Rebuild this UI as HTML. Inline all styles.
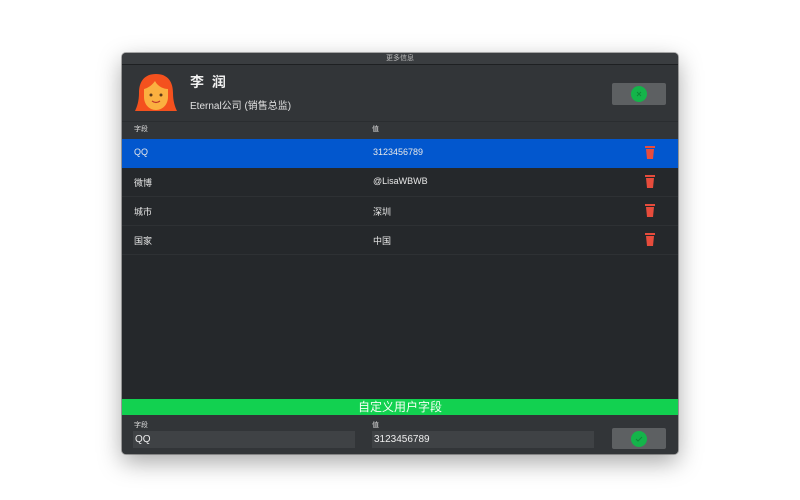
<!DOCTYPE html>
<html><head><meta charset="utf-8"><style>
*{margin:0;padding:0;box-sizing:border-box}
body{width:800px;height:500px;background:#fff;position:relative;overflow:hidden;font-family:"Liberation Sans","Noto Sans CJK SC",sans-serif;color:#e6e6e6}
.win{position:absolute;left:122px;top:53px;width:556px;height:401px;background:#25282b;border-radius:4px;box-shadow:0 8px 24px rgba(0,0,0,.35),0 0 0 1px rgba(0,0,0,.3);overflow:hidden}
.title{position:absolute;left:0;top:0;width:556px;height:12px;background:#3a3d40;border-bottom:1px solid #1e2022;font-size:7px;color:#bbb;text-align:center;line-height:12px}
.head{position:absolute;left:0;top:12px;width:556px;height:56px;background:#323538}
.name{position:absolute;left:68px;top:7px;font-size:14px;font-weight:bold;letter-spacing:2px;color:#f0f0f0}
.org{position:absolute;left:68px;top:32px;font-size:10px;color:#e0e0e0}
.btn{position:absolute;width:54px;height:22px;background:#5d6062;border-radius:2px}
.btn i{position:absolute;left:19px;top:3px;width:16px;height:16px;border-radius:50%;background:#14b44a}
.colh{position:absolute;left:0;top:68px;width:556px;height:18px;background:#323538;border-top:1px solid #2a2d30;font-size:7px;color:#ddd}
.colh span{position:absolute;top:2px}
.row{position:absolute;left:0;width:556px;height:29px;border-bottom:1px solid #2e3134;font-size:9px;color:#e8e8e8}
.row span{position:absolute;top:8px}
.row.sel{background:#0257ce;border:none}
.tr{position:absolute;left:522px;top:6px}
.green{position:absolute;left:0;top:346px;width:556px;height:16px;background:#12d150;color:#f4fff4;font-size:12px;text-align:center;line-height:16px}
.bot{position:absolute;left:0;top:362px;width:556px;height:39px;background:#323538}
.lab{position:absolute;font-size:7px;color:#ddd;top:5px}
.inp{position:absolute;top:16px;height:17px;background:#3f4245;font-size:10px;color:#eee;padding-left:2px;line-height:17px}
</style></head><body>
<div class="win">
<div class="title">更多信息</div>
<div class="head">
<svg style="position:absolute;left:13px;top:8px" width="42" height="40" viewBox="0 0 42 40">
<path d="M21 1C9 1 4 9 4 20c0 8-2 14-4 18h42c-2-4-4-10-4-18C38 9 33 1 21 1z" fill="#f4511e"/>
<path d="M9 16c0 0 6-1 11-8 3 6 9 8 13 8v8c0 7-5 13-12 13S9 31 9 24z" fill="#fbb040"/>
<circle cx="16" cy="22" r="1.5" fill="#5d3b1a"/><circle cx="26" cy="22" r="1.5" fill="#5d3b1a"/>
<path d="M17 28q4 3 8 0" stroke="#c0392b" stroke-width="1.2" fill="none"/>
</svg>
<div class="name">李 润</div>
<div class="org">Eternal公司 (销售总监)</div>
<div class="btn" style="left:490px;top:18px"><i><svg width="16" height="16"><path d="M6 6l4 4M10 6l-4 4" stroke="#0d8a38" stroke-width="1"/></svg></i></div>
</div>
<div class="colh"><span style="left:12px">字段</span><span style="left:250px">值</span></div>
<div class="row sel" style="top:86px"><span style="left:12px">QQ</span><span style="left:251px">3123456789</span>
<svg class="tr" width="12" height="15"><rect x="1" y="1" width="10" height="2" fill="#e74c3c"/><path d="M2 4h8l-1 10H3z" fill="#e74c3c"/></svg></div>
<div class="row" style="top:115px"><span style="left:12px">微博</span><span style="left:251px">@LisaWBWB</span>
<svg class="tr" width="12" height="15"><rect x="1" y="1" width="10" height="2" fill="#e74c3c"/><path d="M2 4h8l-1 10H3z" fill="#e74c3c"/></svg></div>
<div class="row" style="top:144px"><span style="left:12px">城市</span><span style="left:251px">深圳</span>
<svg class="tr" width="12" height="15"><rect x="1" y="1" width="10" height="2" fill="#e74c3c"/><path d="M2 4h8l-1 10H3z" fill="#e74c3c"/></svg></div>
<div class="row" style="top:173px"><span style="left:12px">国家</span><span style="left:251px">中国</span>
<svg class="tr" width="12" height="15"><rect x="1" y="1" width="10" height="2" fill="#e74c3c"/><path d="M2 4h8l-1 10H3z" fill="#e74c3c"/></svg></div>
<div class="green">自定义用户字段</div>
<div class="bot">
<div class="lab" style="left:12px">字段</div><div class="lab" style="left:250px">值</div>
<div class="inp" style="left:11px;width:222px">QQ</div>
<div class="inp" style="left:250px;width:222px">3123456789</div>
<div class="btn" style="left:490px;top:13px;height:21px"><i><svg width="16" height="16"><path d="M5 8l2 2 4-4" stroke="#0d8a38" stroke-width="1" fill="none"/></svg></i></div>
</div>
</div>
</body></html>
